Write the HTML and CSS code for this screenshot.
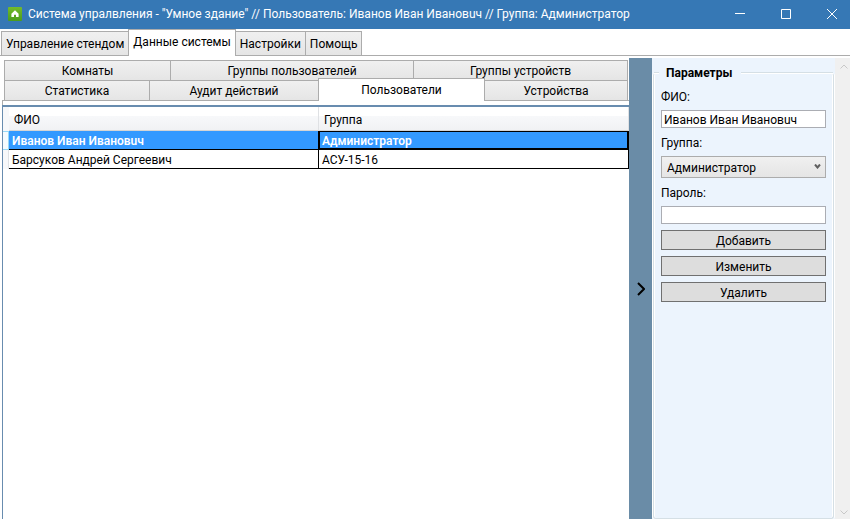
FILE: index.html
```html
<!DOCTYPE html>
<html lang="ru">
<head>
<meta charset="utf-8">
<title>Система управления</title>
<link rel="stylesheet" href="styles.css">
</head>
<body>
<header class="titlebar">
  <svg class="app-icon" width="14" height="14" viewBox="0 0 14 14" aria-hidden="true">
    <defs><linearGradient id="leaf" x1="0" y1="0" x2="0" y2="1"><stop offset="0" stop-color="#74bb2b"/><stop offset="1" stop-color="#4a9c1c"/></linearGradient></defs>
    <rect width="14" height="14" rx="1" fill="url(#leaf)"/>
    <path d="M7 3.2 3.4 6.8V10H6V7.8H8V10h2.600V6.800z" fill="#fff"/>
  </svg>
  <h1 class="title">Система упралвления - "Умное здание" // Пользователь: Иванов Иван Ивановuч // Группа: Администратор</h1>
  <div class="window-buttons">
    <button type="button" aria-label="Свернуть"><svg width="10" height="10" viewBox="0 0 10 10"><path d="M0 4.500h10"/></svg></button>
    <button type="button" aria-label="Развернуть"><svg width="10" height="10" viewBox="0 0 10 10"><path d="M.5.5h9v9h-9z"/></svg></button>
    <button type="button" aria-label="Закрыть"><svg width="10" height="10" viewBox="0 0 10 10"><path d="M0 0l10 10M10 0 0 10"/></svg></button>
  </div>
</header>

<nav class="main-tabs">
  <button type="button" class="tab">Управление стендом</button>
  <button type="button" class="tab active">Данные системы</button>
  <button type="button" class="tab">Настройки</button>
  <button type="button" class="tab">Помощь</button>
</nav>

<main class="workspace">
  <section class="data">
    <div class="sub-tabs">
      <div class="tab-row first-row">
        <button type="button" class="tab">Комнаты</button>
        <button type="button" class="tab">Группы пользователей</button>
        <button type="button" class="tab">Группы устройств</button>
      </div>
      <div class="tab-row second-row">
        <button type="button" class="tab">Статистика</button>
        <button type="button" class="tab">Аудит действий</button>
        <button type="button" class="tab active">Пользователи</button>
        <button type="button" class="tab">Устройства</button>
      </div>
    </div>
    <div class="tab-page">
      <div class="grid-frame">
        <table class="grid">
          <thead>
            <tr><td class="row-head"></td><th scope="col">ФИО</th><th scope="col">Группа</th></tr>
          </thead>
          <tbody>
            <tr class="selected"><td class="row-head"></td><td>Иванов Иван Ивановuч</td><td class="current">Администратор</td></tr>
            <tr><td class="row-head"></td><td>Барсуков Андрей Сергеевич</td><td>АСУ-15-16</td></tr>
          </tbody>
        </table>
      </div>
    </div>
  </section>

  <button type="button" class="splitter" aria-label="Скрыть панель">
    <svg width="8" height="14" viewBox="0 0 8 14"><path d="M1 1l6 6-6 6"/></svg>
  </button>

  <aside class="side">
    <form class="group">
      <div class="group-title"><h2>Параметры</h2></div>
      <label for="fio">ФИО:</label>
      <input id="fio" type="text" value="Иванов Иван Ивановuч">
      <label for="role">Группа:</label>
      <div class="select-box">
        <select id="role"><option>Администратор</option><option>АСУ-15-16</option></select>
        <svg width="7" height="5" viewBox="0 0 7 5" aria-hidden="true"><path d="M1 .5l2.500 3L6 .5"/></svg>
      </div>
      <label for="pass">Пароль:</label>
      <input id="pass" type="password">
      <button type="button">Добавить</button>
      <button type="button">Изменить</button>
      <button type="button">Удалить</button>
    </form>
  </aside>
  <div class="scrollbar" aria-hidden="true">
    <svg width="8" height="5" viewBox="0 0 8 5"><path d="M.5 4.500 4 1l3.500 3.500"/></svg>
    <svg width="8" height="5" viewBox="0 0 8 5"><path d="M.5.5 4 4 7.500.5"/></svg>
  </div>
</main>
</body>
</html>
```
FILE: styles.css
```css
* { box-sizing: border-box; }

body {
  margin: 0;
  height: 100vh;
  display: flex;
  flex-direction: column;
  overflow: hidden;
  background: #fff;
  color: #000;
  font: 12px/16px Roboto, "Noto Sans", sans-serif;
}

button, input, select { font: inherit; color: inherit; margin: 0; border-radius: 0; }

/* Title bar */
.titlebar {
  display: flex;
  align-items: center;
  height: 29px;
  flex: none;
  padding: 0 0 2px 8px;
  background: #3678b5;
  color: #fff;
}
.app-icon { flex: none; margin-right: 6px; }
.title { margin: 0; flex: 1; font-size: 12px; font-weight: 400; white-space: nowrap; }
.window-buttons { display: flex; }
.window-buttons button {
  width: 46px;
  height: 27px;
  padding: 0;
  border: 0;
  background: none;
  display: grid;
  place-items: center;
}
.window-buttons button:last-child { margin-right: -5px; }
.window-buttons path { fill: none; stroke: #fff; }

/* Tabs */
.tab {
  border: 1px solid #acacac;
  background: linear-gradient(#f0f0f0, #e5e5e5);
  padding: 0;
  white-space: nowrap;
}
.tab.active { background: #fff; border-bottom: 0; }

.main-tabs {
  display: flex;
  align-items: flex-end;
  flex: none;
  height: 27px;
  padding-left: 1px;
  box-shadow: inset 0 -1px #acacac;
}
.main-tabs .tab { height: 25px; padding: 0 4px; margin-right: -1px; }
.main-tabs .tab.active { height: 27px; padding-bottom: 2px; z-index: 1; }

.workspace { display: flex; flex: 1; min-height: 0; padding-top: 2px; }
.data { flex: 1; min-width: 0; display: flex; flex-direction: column; padding-left: 2px; }

.sub-tabs { padding: 2px 1px 0 2px; }
.tab-row { display: grid; height: 20px; }
.first-row { grid-template-columns: 166fr 243fr 215fr; }
.second-row { grid-template-columns: 145fr 169fr 166fr 144fr; }
.tab-row .tab { height: 21px; margin-right: -1px; }
.tab-row .tab:last-child { margin-right: 0; }
.tab-row .tab.active { height: 23px; margin-top: -2px; padding-bottom: 1px; z-index: 1; }

.tab-page {
  flex: 1;
  border: 1px solid #acacac;
  border-width: 1px 0 0 1px;
  padding-top: 4px;
  display: flex;
}
.grid-frame { flex: 1; margin-left: -1px; border: 1px solid #688caf; border-width: 2px 0 0 1px; }

/* Data grid */
.grid { width: 100%; table-layout: fixed; border-collapse: separate; border-spacing: 0; }
.grid th, .grid td { padding: 1px 3px 0; text-align: left; font-weight: 400; overflow: hidden; white-space: nowrap; }
.grid thead th {
  height: 24px;
  padding: 2px 5px 0;
  background: linear-gradient(#fff 0, #fff 40%, #f7f8fa 41%, #f1f2f4);
  border-right: 1px solid #dfe1e4;
  border-bottom: 1px solid #d5d5d5;
}
.grid tbody td { height: 19px; border-right: 1px solid #000; border-bottom: 1px solid #000; }
.grid .row-head { width: 6px; padding: 0; background: #f7f8fa; border-color: #dfe1e4; border-bottom-width: 0; }
.grid .selected td { background: #3399ff; color: #fff; font-weight: 600; }
.grid .selected .row-head { background: #f5fbfe; border-color: #98d8f5; box-shadow: inset 0 1px #98d8f5, inset 0 -1px #98d8f5; }
.grid .selected .current { box-shadow: inset 1px 1px #000, inset -1px -1px #000; }

/* Splitter */
.splitter {
  width: 23px;
  flex: none;
  padding: 0;
  border: 0;
  background: #6a8ca7;
  display: grid;
  place-items: center;
}
.splitter path { fill: none; stroke: #000; stroke-width: 2; }

/* Parameters panel */
.side { width: 183px; flex: none; background: #ecf4fd; display: flex; padding: 15px 1px 0; }
.group {
  flex: 1;
  display: flex;
  flex-direction: column;
  border: 1px solid #d5dfe5;
  border-top: 0;
  border-radius: 3px;
  box-shadow: -1px 0 #fff, 1px 0 #fff, inset 1px 0 #fff, inset -1px 0 #fff;
  padding: 0 7px;
}
.group-title {
  display: flex;
  align-items: center;
  height: 16px;
  margin: -8px -7px 1px;
}
.group-title::before, .group-title::after {
  content: "";
  height: 2px;
  background: linear-gradient(#d5dfe5 50%, #fff 50%);
}
.group-title::before { width: 5px; }
.group-title::after { flex: 1; }
.group-title h2 { margin: 0 9px 0 7px; font-size: 12px; line-height: 16px; font-weight: 700; }
.group label { margin: 7px 0 5px; }
.group input { width: 100%; height: 18px; border: 1px solid #abadb3; background: #fff; padding: 1px 2px 0; outline: 0; }
.select-box { display: grid; align-items: center; }
.select-box > * { grid-area: 1 / 1; }
.select-box svg { justify-self: end; margin: 0 5px 2px 0; pointer-events: none; }
.select-box path { fill: none; stroke: #606060; stroke-width: 2; }
.select-box select {
  appearance: none;
  width: 100%;
  height: 22px;
  border: 1px solid #acacac;
  background: linear-gradient(#f0f0f0, #e5e5e5);
  padding: 1px 5px 0;
}
.group button { height: 20px; margin-top: 6px; padding: 1px 0 0; border: 1px solid #707070; background: #ddd; }

.scrollbar {
  width: 15px;
  flex: none;
  background: #f0f0f0;
  display: flex;
  flex-direction: column;
  align-items: center;
  justify-content: space-between;
  padding: 6px 0 4px 2px;
}
.scrollbar path { fill: none; stroke: #c8c8c8; }
```
